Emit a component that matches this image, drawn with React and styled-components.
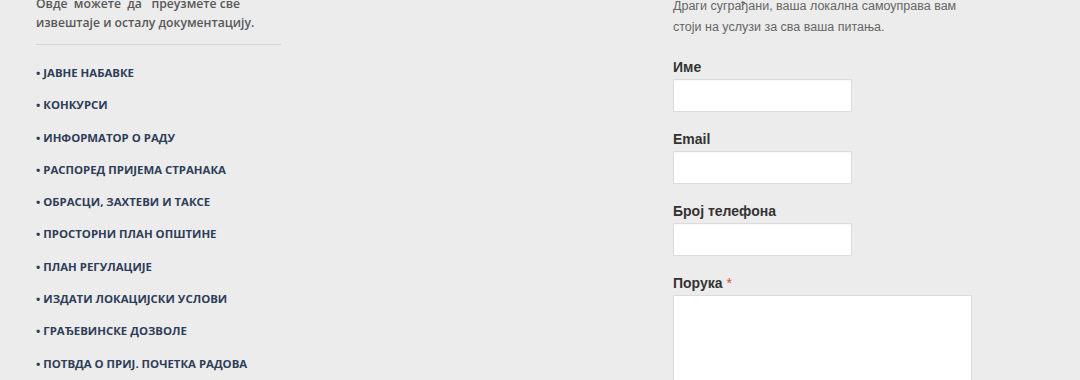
import React from "react";
import styled, { createGlobalStyle } from "styled-components";

const GlobalStyle = createGlobalStyle`
  html, body {
    margin: 0;
    padding: 0;
    background: #ececec;
  }
  body {
    overflow: hidden;
  }
`;

const Page = styled.div`
  display: grid;
  grid-template-columns: 245px 300px;
  column-gap: 392px;
  padding-left: 36px;
  height: 380px;
  overflow: hidden;
`;

const LeftCol = styled.div`
  font-family: "Open Sans", "Liberation Sans", sans-serif;
`;

const Intro = styled.p`
  margin: -6px 0 0;
  font-size: 12.2px;
  line-height: 19px;
  font-weight: 600;
  color: #585858;
  white-space: nowrap;
`;

const Divider = styled.hr`
  border: 0;
  border-top: 1px solid #d4d4d4;
  margin: 12px 0 12px;
`;

const LinkList = styled.ul`
  list-style: none;
  margin: 0;
  padding: 0;
`;

const LinkItem = styled.li`
  padding: 8px 0;
  line-height: 16.3px;
  font-size: 11.4px;
  font-weight: 700;
  color: #2e3d58;
  text-transform: uppercase;
  white-space: nowrap;
`;

const RightCol = styled.div`
  font-family: "Liberation Sans", Arial, sans-serif;
`;

const Lead = styled.p`
  margin: -4px 0 19px;
  font-size: 12.5px;
  line-height: 21px;
  color: #666;
`;

const Field = styled.div`
  margin-bottom: 17px;
`;

const Label = styled.label`
  display: block;
  font-size: 14px;
  line-height: 20px;
  font-weight: 700;
  color: #333;
  margin-bottom: 2px;
`;

const Required = styled.span`
  color: #e0463a;
  font-weight: 400;
  margin-left: 4px;
`;

const Input = styled.input`
  display: block;
  box-sizing: border-box;
  width: 179px;
  height: 33px;
  border: 1px solid #dcdcdc;
  background: #fff;
  box-shadow: inset 0 1px 2px rgba(0, 0, 0, 0.04);
`;

const Message = styled.textarea`
  display: block;
  box-sizing: border-box;
  width: 299px;
  height: 120px;
  border: 1px solid #dcdcdc;
  background: #fff;
  resize: none;
`;

const links = [
  "Јавне набавке",
  "Конкурси",
  "Информатор о раду",
  "Распоред пријема странака",
  "Обрасци, захтеви и таксе",
  "Просторни план општине",
  "План регулације",
  "Издати локацијски услови",
  "Грађевинске дозволе",
  "Потвда о приј. почетка радова",
];

const App = () => {
  return (
    <>
      <GlobalStyle />
      <Page>
        <LeftCol>
          <Intro>
            Овде&nbsp; можете&nbsp; да&nbsp;&nbsp; преузмете све
            <br />
            извештаје и осталу документацију.
          </Intro>
          <Divider />
          <LinkList>
            {links.map((l) => (
              <LinkItem key={l}>• {l}</LinkItem>
            ))}
          </LinkList>
        </LeftCol>
        <RightCol>
          <Lead>
            Драги суграђани, ваша локална самоуправа вам
            <br />
            стоји на услузи за сва ваша питања.
          </Lead>
          <Field>
            <Label>Име</Label>
            <Input type="text" />
          </Field>
          <Field>
            <Label>Email</Label>
            <Input type="email" />
          </Field>
          <Field>
            <Label>Број телефона</Label>
            <Input type="text" />
          </Field>
          <Field>
            <Label>
              Порука<Required>*</Required>
            </Label>
            <Message />
          </Field>
        </RightCol>
      </Page>
    </>
  );
};

export default App;
